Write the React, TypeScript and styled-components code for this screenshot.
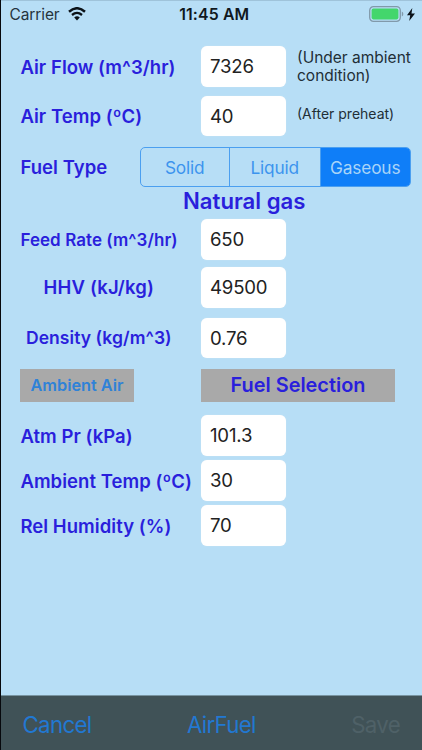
import React from "react";
import styled, { createGlobalStyle } from "styled-components";

const GlobalStyle = createGlobalStyle`
  *, *::before, *::after { box-sizing: border-box; }
  html, body { margin: 0; padding: 0; background: #b7def6; }
  button { font: inherit; margin: 0; padding: 0; border: 0; background: none; }
`;

const Screen = styled.div`
  display: flex;
  flex-direction: column;
  width: 422px;
  height: 750px;
  overflow: hidden;
  background: #b7def6;
  border-left: 1.5px solid #06080c;
  font-family: Inter, "Liberation Sans", sans-serif;
  white-space: nowrap;
`;

const StatusBar = styled.header`
  display: grid;
  grid-template-columns: 1fr auto 1fr;
  align-items: center;
  height: 27px;
  padding: 0 7px 0 8.5px;
  border-top: 1px solid #9fc3da;
`;

const Carrier = styled.div`
  display: flex;
  align-items: center;
  gap: 8px;
  font-size: 15.5px;
  letter-spacing: -0.1px;
  color: #26343d;
`;

const Clock = styled.time`
  padding-left: 4px;
  font-size: 15.8px;
  font-weight: 600;
  letter-spacing: 0.15px;
  color: #10181e;
`;

const Power = styled.div`
  display: flex;
  justify-content: flex-end;
  align-items: center;
  gap: 3px;
`;

const Form = styled.main`
  display: flex;
  flex-direction: column;
  flex: 1;
  padding: 19px 10px 0 19px;
`;

const Row = styled.div<{ $gap?: number }>`
  display: grid;
  grid-template-columns: 181px 85px 1fr;
  align-items: center;
  height: 40.5px;
  margin-bottom: ${(p) => p.$gap ?? 0}px;
`;

const Label = styled.label<{ $size?: number; $indent?: number; $track?: number; $drop?: number }>`
  padding: ${(p) => p.$drop ?? 1}px 0 0 ${(p) => p.$indent ?? 0.4}px;
  font-size: ${(p) => p.$size ?? 18.5}px;
  font-weight: 600;
  letter-spacing: ${(p) => p.$track ?? 0.05}px;
  color: #2a1fdc;
`;

const Field = styled.div`
  display: flex;
  align-items: center;
  height: 40.5px;
  padding: 0 0 0 9px;
  border-radius: 6px;
  background: #fff;
  box-shadow: 0 0 1px #dfeaf1;
  font-size: 18.6px;
  letter-spacing: -0.2px;
  color: #222;
`;

const Note = styled.span<{ $size: number; $lift?: number }>`
  padding: 2px 0 ${(p) => p.$lift ?? 0}px 11px;
  font-size: ${(p) => p.$size}px;
  line-height: 18px;
  color: #222e36;
`;

const FuelRow = styled.div`
  display: flex;
  align-items: center;
  justify-content: space-between;
  height: 40px;
`;

const Segments = styled.div`
  display: grid;
  grid-template-columns: 89px 91px 1fr;
  width: 271px;
  height: 40px;
  margin-right: 1.3px;
  border: 1.5px solid #4b9ff0;
  border-radius: 5px;
  overflow: hidden;
`;

const Segment = styled.button<{ $active?: boolean }>`
  border-right: ${(p) => (p.$active ? "0" : "1.5px solid #4b9ff0")};
  background: ${(p) => (p.$active ? "#0f7ef8" : "transparent")};
  color: ${(p) => (p.$active ? "#a9d4f8" : "#3c94ee")};
  font-size: 17.3px;
  letter-spacing: -0.15px;
`;

const FuelName = styled.h2`
  margin: 0;
  height: 32px;
  padding-left: 163px;
  font-size: 22.2px;
  line-height: 28px;
  font-weight: 600;
  color: #2a1fdc;
`;

const Actions = styled.div`
  display: flex;
  gap: 67px;
  height: 33.5px;
  margin-bottom: 13px;
`;

const Action = styled.button<{ $width: number; $color: string; $size: number }>`
  width: ${(p) => p.$width}px;
  height: 33.5px;
  background: #a9a9a9;
  color: ${(p) => p.$color};
  font-size: ${(p) => p.$size}px;
  font-weight: 600;
`;

const Toolbar = styled.footer`
  display: flex;
  justify-content: space-between;
  align-items: center;
  height: 55px;
  padding: 3px 22px 0 21.5px;
  border-top: 1px solid #7894a1;
  background: #405257;
`;

const ToolButton = styled.button<{ $disabled?: boolean }>`
  font-size: 22.3px;
  letter-spacing: -0.7px;
  color: ${(p) => (p.$disabled ? "#4f6167" : "#2278d2")};
`;

const WifiIcon = () => (
  <svg width="18" height="14" viewBox="0 0 18 14" fill="none" stroke="#0b1218">
    <path d="M1 4.7Q9-2.2 17 4.7" strokeWidth="2.5" />
    <path d="M4 8Q9 3.8 14 8" strokeWidth="2.3" />
    <path d="M9 13.5 6.2 10.5Q9 8.2 11.8 10.5Z" fill="#0b1218" stroke="none" />
  </svg>
);

const BatteryIcon = () => (
  <svg width="35" height="16" viewBox="0 0 35 16">
    <rect x="0.7" y="0.7" width="30.6" height="14.6" rx="3.7" fill="#b7def6" stroke="#8199aa" strokeWidth="1.3" />
    <rect x="2.6" y="2.6" width="26.8" height="10.8" rx="1.8" fill="#43d66c" />
    <path d="M32.8 5.5c2 .8 2 4.2 0 5z" fill="#8199aa" />
  </svg>
);

const BoltIcon = () => (
  <svg width="8" height="13" viewBox="0 0 8 13">
    <path d="M5.3 0 0 7.2h3.2L2.2 13 8 5.4H4.5z" fill="#0b1218" />
  </svg>
);

export default function App() {
  return (
    <>
      <GlobalStyle />
      <Screen>
        <StatusBar>
          <Carrier>
            Carrier
            <WifiIcon />
          </Carrier>
          <Clock>11:45 AM</Clock>
          <Power>
            <BatteryIcon />
            <BoltIcon />
          </Power>
        </StatusBar>
        <Form>
          <Row $gap={9}>
            <Label>Air Flow (m^3/hr)</Label>
            <Field>7326</Field>
            <Note $size={15.5}>
              (Under ambient
              <br />
              condition)
            </Note>
          </Row>
          <Row $gap={11}>
            <Label>Air Temp (ºC)</Label>
            <Field>40</Field>
            <Note $size={14} $lift={6}>(After preheat)</Note>
          </Row>
          <FuelRow>
            <Label $drop={0}>Fuel Type</Label>
            <Segments>
              <Segment>Solid</Segment>
              <Segment>Liquid</Segment>
              <Segment $active>Gaseous</Segment>
            </Segments>
          </FuelRow>
          <FuelName>Natural gas</FuelName>
          <Row $gap={7.5}>
            <Label $size={17} $track={0.06}>Feed Rate (m^3/hr)</Label>
            <Field>650</Field>
          </Row>
          <Row $gap={10}>
            <Label $indent={23.5} $track={0.18} $drop={0}>HHV (kJ/kg)</Label>
            <Field>49500</Field>
          </Row>
          <Row $gap={10.5}>
            <Label $size={17.5} $indent={6} $drop={0}>Density (kg/m^3)</Label>
            <Field>0.76</Field>
          </Row>
          <Actions>
            <Action $width={114} $color="#2f82d8" $size={16.3}>Ambient Air</Action>
            <Action $width={194} $color="#2a1fdc" $size={19.9}>Fuel Selection</Action>
          </Actions>
          <Row $gap={4.5}>
            <Label>Atm Pr (kPa)</Label>
            <Field>101.3</Field>
          </Row>
          <Row $gap={4.5}>
            <Label>Ambient Temp (ºC)</Label>
            <Field>30</Field>
          </Row>
          <Row>
            <Label>Rel Humidity (%)</Label>
            <Field>70</Field>
          </Row>
        </Form>
        <Toolbar>
          <ToolButton>Cancel</ToolButton>
          <ToolButton>AirFuel</ToolButton>
          <ToolButton $disabled>Save</ToolButton>
        </Toolbar>
      </Screen>
    </>
  );
}
